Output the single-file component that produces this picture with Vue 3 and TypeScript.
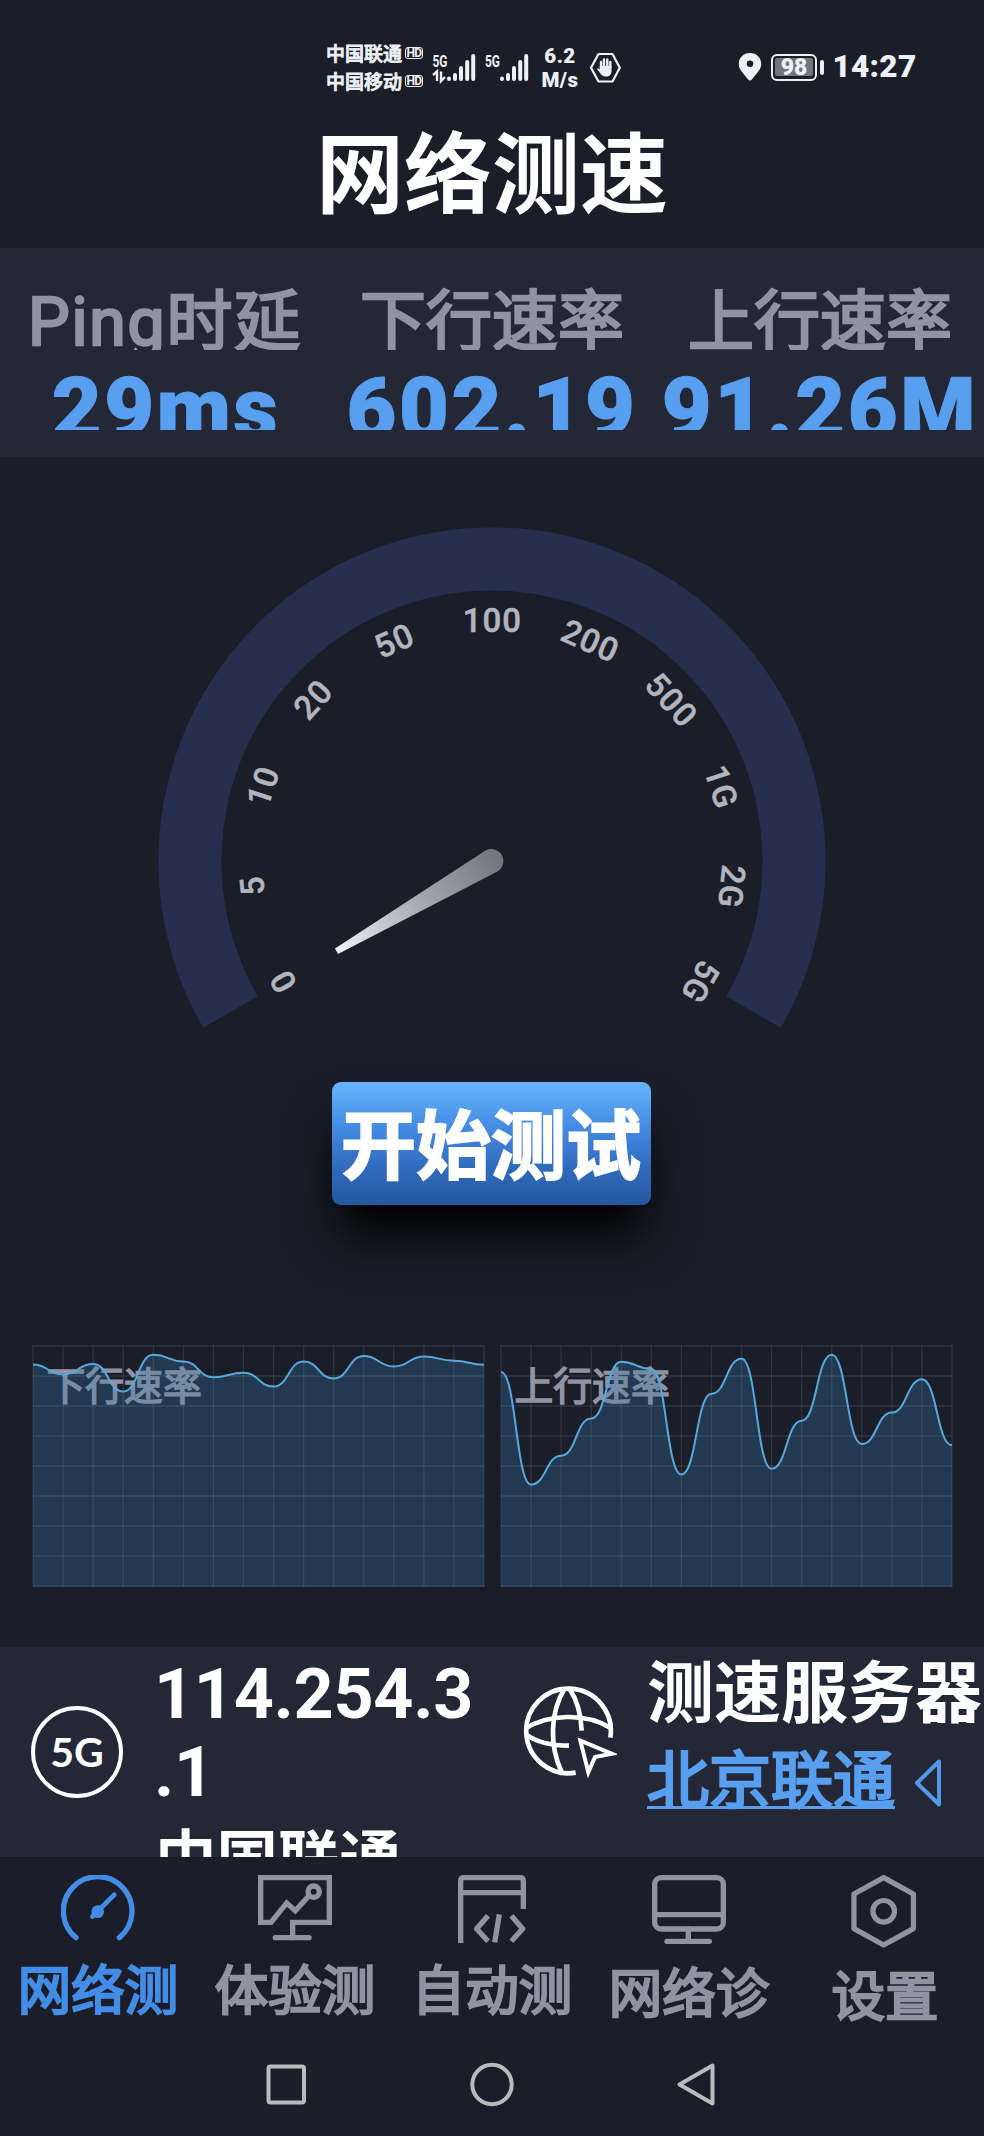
<script setup lang="ts">
interface Metric { label: string; value: string; cls: string }
interface Chart { label: string; cls: string; points: number[] }

const metrics: Metric[] = [
  { label: 'Ping时延', value: '29ms', cls: 'ping' },
  { label: '下行速率', value: '602.19', cls: 'down' },
  { label: '上行速率', value: '91.26M', cls: 'up' },
]

const ticks = ['0', '5', '10', '20', '50', '100', '200', '500', '1G', '2G', '5G']
  .map((text, i) => ({ text, transform: `rotate(${-120 + i * 24} 492 404)` }))

const charts: Chart[] = [
  { label: '下行速率', cls: 'left', points: [20.5, 30.5, 20, 47.5, 10.7, 17.5, 33.3, 28.7, 42.5, 17.5, 34.5, 12, 22.5, 12.5, 16.7, 20.7] },
  { label: '上行速率', cls: 'right', points: [28, 140.5, 111.7, 74.5, 17.7, 25, 130.5, 49.7, 14.7, 124.7, 76.7, 10.7, 100, 68.5, 35.3, 101.3] },
]

const step = 451 / 15

function curve(points: number[]): string {
  return points.reduce((d, y, i) => {
    if (i === 0) return `M0 ${y}`
    const x = i * step
    const mid = x - step / 2
    return `${d} C${mid} ${points[i - 1]} ${mid} ${y} ${x} ${y}`
  }, '')
}

function area(points: number[]): string {
  return `${curve(points)} V243 H0 Z`
}
</script>

<template>
  <div class="screen">
    <header>
      <div class="status">
        <div class="carriers">
          <div v-for="name in ['中国联通', '中国移动']" :key="name" class="carrier">
            <span>{{ name }}</span><b class="hd">HD</b>
          </div>
        </div>
        <svg class="signals" width="100" height="34" viewBox="0 0 100 34" fill="#eef1f4">
          <text x="0.500" y="15" textLength="15" lengthAdjust="spacingAndGlyphs">5G</text>
          <text x="53" y="15" textLength="15" lengthAdjust="spacingAndGlyphs">5G</text>
          <g stroke="#eef1f4" stroke-width="4" stroke-linecap="round">
            <path d="M17 26.500v.5M23 23v4M29 16v11M35.200 10v17M41.200 4v23" />
            <path d="M70 26.500v.5M76 23v4M82 16v11M88.200 10v17M94.200 4v23" />
          </g>
          <path d="M1 23l4-3.500V29M9 19.500V29l4-4" fill="none" stroke="#eef1f4" stroke-width="2.400" />
        </svg>
        <div class="rate"><span>6.2</span><span>M/s</span></div>
        <svg class="hand" width="33" height="32" viewBox="0 0 33 32" fill="none" stroke="#eef1f4">
          <path d="M9.500 2h14l7.300 13.700L23.500 29.500h-14L2 15.700z" stroke-width="2.200" stroke-linejoin="round" />
          <path d="M12 16V10M15 14V7.500M18.300 14V7.500M21.300 15v-5" stroke-width="2.400" stroke-linecap="round" />
          <path d="M10.800 14h11.700v5c0 3.500-2 5.500-5.500 5.500-3 0-4.500-1.200-6-3.500l-3-4c1-1 2-.4 2.800.6z" fill="#eef1f4" stroke="none" />
        </svg>
        <svg class="pin" width="24" height="28" viewBox="0 0 24 28">
          <path d="M12 0C5.300 0 .8 4.700.8 11c0 6.200 5 9.500 9.400 15.600 1 1.200 2.600 1.200 3.600 0C18.200 20.500 23.200 17.200 23.200 11 23.200 4.700 18.700 0 12 0z" fill="#eef1f4" />
          <circle cx="12" cy="10.800" r="3.300" fill="#1b1e29" />
        </svg>
        <div class="battery"><span>98</span></div>
        <i class="cap"></i>
        <span class="clock">14:27</span>
      </div>
      <h1>网络测速</h1>
    </header>

    <section class="metrics">
      <div v-for="m in metrics" :key="m.label" class="metric" :class="m.cls">
        <div class="mlabel">{{ m.label }}</div>
        <div class="mvalue"><span>{{ m.value }}</span></div>
      </div>
    </section>

    <svg class="gauge" width="984" height="603" viewBox="0 0 984 603">
      <defs>
        <linearGradient id="needle" gradientUnits="userSpaceOnUse" x1="336" y1="494" x2="500" y2="400">
          <stop offset="0" stop-color="#f0f1f6" />
          <stop offset="0.5" stop-color="#a8aab2" />
          <stop offset="1" stop-color="#73757e" />
        </linearGradient>
      </defs>
      <path d="M230.500 555A302 302 0 1 1 753.500 555" fill="none" stroke="#262f4e" stroke-width="63" />
      <text v-for="t in ticks" :key="t.text" :transform="t.transform" x="492.500" y="174.500">{{ t.text }}</text>
      <path d="M335 491.500L485.500 393.500A12 12 0 1 1 497 414.700L338 497z" fill="url(#needle)" />
    </svg>

    <div class="action"><button>开始测试</button></div>

    <section class="charts">
      <svg v-for="c in charts" :key="c.cls" width="451" height="243" viewBox="0 0 451 243" :class="c.cls">
        <text x="13.500" y="56">{{ c.label }}</text>
        <path class="area" :d="area(c.points)" />
        <path class="grid" d="M0 2H451M0 32H451M0 62H451M0 92H451M0 122H451M0 152H451M0 182H451M0 212H451M0 242H451" />
        <path v-for="n in 16" :key="n" class="grid" :d="`M${(n - 1) * step} 1V243`" />
        <path class="line" :d="curve(c.points)" />
      </svg>
    </section>

    <section class="network">
      <div class="badge">5G</div>
      <div class="client">
        <div class="ip">114.254.3</div>
        <div class="ip">.1</div>
        <div class="isp">中国联通</div>
      </div>
      <svg class="globe" width="94" height="94" viewBox="0 0 282 282" fill="none" stroke="#fff" stroke-width="14">
        <path d="M262 158A127 127 0 1 0 158 263" />
        <path d="M176 137C174 88 160 42 140 12M124 12C82 82 78 180 116 262" />
        <path d="M8 130C76 88 184 82 262 128M8 148C42 172 88 182 138 182" />
        <path d="M172 167L266 206L216 216L196 262z" stroke-width="12" />
      </svg>
      <div class="server">
        <div class="stitle">测速服务器</div>
        <div class="choice">
          <a>北京联通</a>
          <svg width="30" height="50" viewBox="0 0 30 50" fill="none" stroke="#5297e9" stroke-width="4">
            <path d="M4 25L26 3.500V46.500z" stroke-linejoin="round" />
          </svg>
        </div>
      </div>
    </section>

    <nav class="tabs">
      <div class="tab active">
        <svg viewBox="0 0 222 222">
          <path d="M45 188A103 103 0 1 1 175 188" />
          <path d="M94 125L160 59" stroke-width="14" />
          <circle cx="110" cy="110" r="19" fill="currentColor" stroke="none" />
        </svg>
        <span>网络测</span>
      </div>
      <div class="tab">
        <svg viewBox="0 0 222 222">
          <path d="M104 188V142H214V8H8V142H39L86 84L112 107L150 65" stroke-linejoin="miter" />
          <circle cx="167" cy="50" r="17" />
          <path d="M52 188H153" />
        </svg>
        <span>体验测</span>
      </div>
      <div class="tab">
        <svg viewBox="-9 0 222 222">
          <path d="M8 196V17Q8 8 17 8H187Q196 8 196 17V94" stroke-linecap="square" />
          <path d="M8 53H196" />
          <path d="M90 122L56 161L90 199M124 118L110 202M160 122L194 161L160 199" stroke-linecap="butt" />
        </svg>
        <span>自动测</span>
      </div>
      <div class="tab diag">
        <svg viewBox="0 0 222 222">
          <rect x="8" y="8" width="206" height="154" rx="20" />
          <path d="M8 119H214M109 162V199M45 199H172" />
        </svg>
        <span>网络诊</span>
      </div>
      <div class="tab settings">
        <svg viewBox="-8 0 222 222">
          <path d="M99 8L190 58V164L99 214L8 164V58z" />
          <circle cx="99" cy="111" r="33" />
        </svg>
        <span>设置</span>
      </div>
    </nav>

    <svg class="sysnav" width="984" height="103" viewBox="0 0 984 103" fill="none" stroke="#b8babc" stroke-width="4">
      <rect x="268.500" y="33.500" width="35.500" height="36" rx="2" />
      <circle cx="492" cy="51.500" r="19.700" />
      <path d="M679.500 51.500L712.500 32.500V70.500z" stroke-linejoin="round" />
    </svg>
  </div>
</template>

<style>
body { background: #1b1e29; }
</style>

<style scoped>
.screen {
  width: 984px;
  height: 2136px;
  overflow: hidden;
  display: flex;
  flex-direction: column;
  background: #1b1e29;
  font-family: Roboto, "Noto Sans CJK SC", sans-serif;
}
header { height: 248px; flex: none; border-bottom: 1px solid #191b25; box-sizing: border-box; }
.status { height: 100px; display: flex; align-items: flex-start; color: #eef1f4; }
.carriers { margin: 38.500px 0 0 326px; width: 106px; }
.carrier { height: 28px; display: flex; align-items: center; font-size: 19px; font-weight: 500; -webkit-text-stroke: .8px #eef1f4; }
.hd { margin-left: 3px; width: 16px; height: 10px; border: 1.500px solid #eef1f4; border-radius: 3px; font-size: 12px; line-height: 10.500px; letter-spacing: -.5px; text-align: center; -webkit-text-stroke: 0; }
.signals { margin-top: 52px; }
.signals text { font: 700 17px Roboto, sans-serif; }
.rate { margin-top: 44px; width: 56px; display: flex; flex-direction: column; align-items: center; font-size: 20.500px; font-weight: 900; line-height: 24px; letter-spacing: .5px; }
.hand { margin: 52px 0 0 1px; }
.pin { margin: 53px 0 0 116px; }
.battery { margin: 54px 0 0 9px; width: 46px; height: 27px; box-sizing: border-box; border: 2.500px solid #eef1f4; border-radius: 6px; padding: 2px; }
.battery span { display: block; height: 18px; border-radius: 2px; background: #73757e; text-align: center; font-size: 23px; line-height: 19px; font-weight: 900; }
.cap { width: 4px; height: 15px; margin: 60px 0 0 3px; border-radius: 2px; background: #eef1f4; }
.clock { margin: 47px 0 0 8.500px; font-size: 31.500px; line-height: 39px; font-weight: 900; letter-spacing: .3px; }
h1 { margin: 0; height: 147px; line-height: 135px; text-align: center; color: #fff; font-size: 88px; font-weight: 700; font-family: "Noto Sans CJK SC", sans-serif; }

.metrics { height: 209px; flex: none; background: #242735; display: flex; }
.metric { width: 328px; display: flex; flex-direction: column; align-items: center; }
.mlabel { margin-top: 36px; height: 66px; overflow: hidden; color: #9094a2; font-size: 66px; line-height: 78px; -webkit-text-stroke: 2.600px #9094a2; white-space: nowrap; }
.ping .mlabel { letter-spacing: 1.800px; padding-left: 2px; }
.mvalue { margin-top: 18px; height: 62px; overflow: hidden; width: 328px; display: flex; justify-content: center; color: #589ff0; font-size: 86px; line-height: 82px; font-weight: 900; letter-spacing: 2.600px; -webkit-text-stroke: 1px #589ff0; white-space: nowrap; }
.ping .mvalue { padding-left: 4px; box-sizing: border-box; }

.gauge { flex: none; display: block; }
.gauge text { fill: #b2b5be; font: 500 33px Roboto, sans-serif; letter-spacing: 1px; text-anchor: middle; stroke: #b2b5be; stroke-width: .5px; }

.action { height: 284px; flex: none; display: flex; justify-content: center; }
button {
  margin: 22px 2px 0 0;
  width: 319px;
  height: 123px;
  padding: 0;
  border: 0;
  border-radius: 9px;
  background: linear-gradient(#66b5fb 0%, #4389e2 38%, #306bbd 70%, #24589e 100%);
  box-shadow: 0 36px 48px -6px #000;
  color: #fff;
  font: 700 75px/118px "Noto Sans CJK SC", sans-serif;
  -webkit-text-stroke: 2px #fff;
  white-space: nowrap;
}
button { padding-bottom: 5px; }

.charts { height: 303px; flex: none; display: flex; gap: 16.500px; padding-left: 33px; box-sizing: border-box; }
.charts svg { overflow: visible; }
.charts text { fill: #9094a2; stroke: #9094a2; stroke-width: 1.500px; font: 400 38.800px "Noto Sans CJK SC", sans-serif; }
.area { fill: #397bb1; fill-opacity: .3; }
.grid { fill: none; stroke: #8fa4b8; stroke-opacity: .17; stroke-width: 1.300; }
.line { fill: none; stroke: #57a9dd; stroke-width: 2; }

.network { height: 210px; flex: none; overflow: hidden; background: #242735; display: flex; color: #fff; }
.badge { margin: 59px 0 0 31px; width: 92px; height: 92px; box-sizing: border-box; border: 4px solid #fff; border-radius: 50%; text-align: center; font: 700 41px/83px Lato, sans-serif; }
.client { margin: 8px 0 0 31px; width: 367px; }
.ip { height: 78px; font-size: 70px; line-height: 78px; font-weight: 700; letter-spacing: -.3px; }
.isp { height: 78px; padding: 5px 0 0 1px; font: 700 61.500px/78px "Noto Sans CJK SC", sans-serif; }
.globe { margin: 38px 0 0 2px; flex: none; }
.server { margin: 0 0 0 30px; width: 336px; flex: none; }
.stitle { height: 91px; font: 700 67px/82px "Noto Sans CJK SC", sans-serif; white-space: nowrap; }
.choice { display: flex; }
.choice a { height: 71px; box-sizing: border-box; border-bottom: 3px solid #589ff0; color: #589ff0; font: 400 62px/77px "Noto Sans CJK SC", sans-serif; -webkit-text-stroke: 2.600px #589ff0; }
.choice svg { margin: 20px 0 0 18px; }

.tabs { height: 176px; flex: none; display: flex; color: #9094a2; border-top: 1px solid #181a24; box-sizing: border-box; }
.tab { flex: 1; display: flex; flex-direction: column; align-items: center; }
.tab svg { width: 74px; height: 74px; margin-top: 17px; fill: none; stroke: currentColor; stroke-width: 16; stroke-linecap: round; stroke-linejoin: round; }
.tab span { height: 80px; font: 400 53.500px/75px "Noto Sans CJK SC", sans-serif; -webkit-text-stroke: 2.400px currentColor; }
.tab:not(.settings) { padding-right: 1px; }
.active { color: #448de6; }
.diag span { padding-top: 3px; }
.settings span { padding-top: 7px; }
.settings { position: relative; right: 1px; }
.sysnav { display: block; flex: none; }
</style>
